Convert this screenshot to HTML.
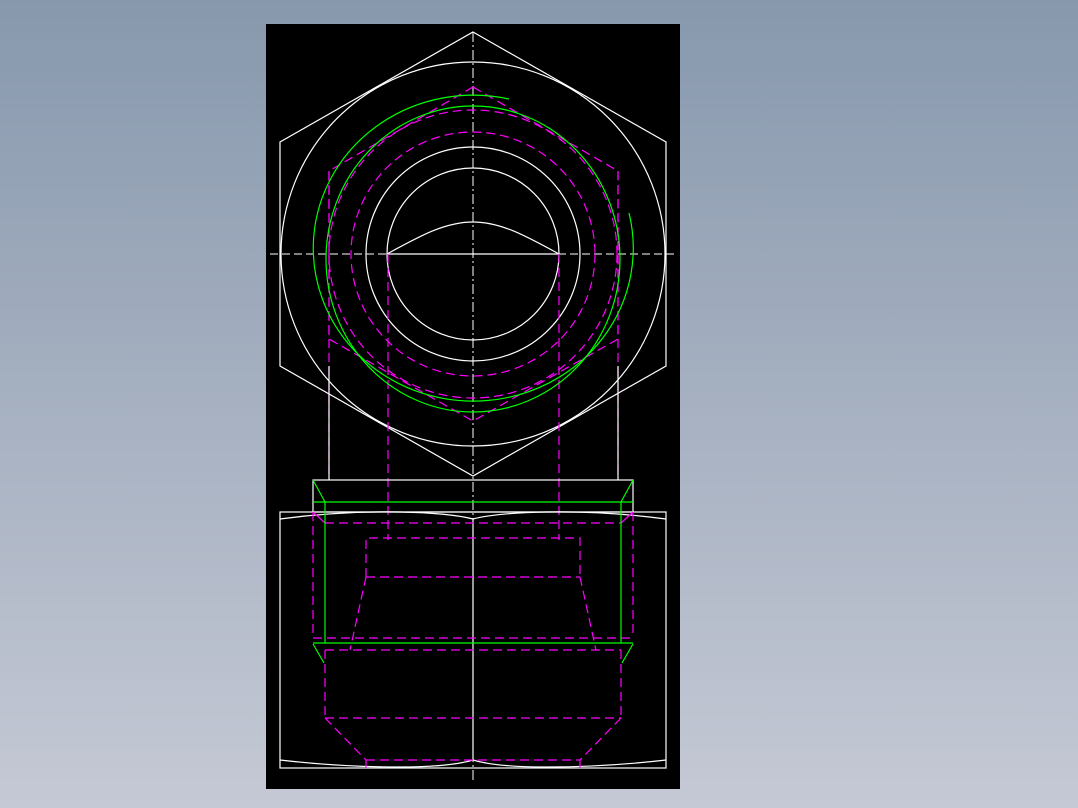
<!DOCTYPE html>
<html><head><meta charset="utf-8"><style>
html,body{margin:0;padding:0;width:1078px;height:808px;overflow:hidden;background:linear-gradient(#8798ad,#c5c9d5);}
svg{position:absolute;left:0;top:0}
</style></head><body>
<svg width="1078" height="808" viewBox="0 0 1078 808" fill="none" stroke-width="1.2">
<rect x="266" y="24" width="414" height="765" fill="#000" stroke="none"/>
<line x1="473" y1="32" x2="473" y2="782" stroke="#fff" stroke-dasharray="10,3,2,3" stroke-width="1"/>
<line x1="270" y1="254" x2="676" y2="254" stroke="#fff" stroke-dasharray="8,4" stroke-width="1"/>
<polygon points="473,32 666,142 666,366 473,476 280,366 280,142" stroke="#fff"/>
<circle cx="473" cy="254" r="192" stroke="#fff"/>
<circle cx="473" cy="254" r="107" stroke="#fff"/>
<circle cx="473" cy="254" r="86" stroke="#fff"/>
<path d="M387,254 C420,236 445,222 473,222 C501,222 526,236 559,254" stroke="#fff"/>
<line x1="387" y1="254" x2="559" y2="254" stroke="#fff"/>
<g stroke="#f0f" stroke-dasharray="9,5">
<circle cx="473" cy="254" r="122"/>
<circle cx="473" cy="254" r="144"/>
<polygon points="473,87 618,171 618,339 473,421 329,339 329,171"/>
<line x1="329" y1="171" x2="329" y2="480"/>
<line x1="618" y1="171" x2="618" y2="480"/>
<line x1="388" y1="254" x2="388" y2="540"/>
<line x1="559" y1="254" x2="559" y2="540"/>
</g>
<path d="M629,213 A160,153 0 1 1 509,99" stroke="#0f0"/>
<ellipse cx="473" cy="259" rx="147" ry="153" stroke="#0f0"/>
<line x1="329" y1="366" x2="329" y2="480" stroke="#fff"/>
<line x1="618" y1="366" x2="618" y2="480" stroke="#fff"/>
<rect x="313" y="480" width="320" height="32" stroke="#fff"/>
<rect x="280" y="512" width="386" height="256" stroke="#fff"/>
<path d="M280,519 Q340,511 400,512 Q450,513 473,519 Q496,513 546,512 Q606,511 666,519" stroke="#fff"/>
<path d="M280,760 Q340,767 400,767 Q450,767 473,760 Q496,767 546,767 Q606,767 666,760" stroke="#fff"/>
<line x1="473" y1="519" x2="473" y2="760" stroke="#fff"/>
<g stroke="#f0f" stroke-dasharray="9,5">
<line x1="313" y1="512" x2="313" y2="638"/>
<line x1="633" y1="512" x2="633" y2="638"/>
<line x1="325" y1="523" x2="621" y2="523"/>
<line x1="313" y1="638" x2="633" y2="638"/>
<line x1="325" y1="650" x2="621" y2="650"/>
<line x1="325" y1="650" x2="325" y2="718"/>
<line x1="621" y1="650" x2="621" y2="718"/>
<line x1="325" y1="718" x2="621" y2="718"/>
<line x1="325" y1="718" x2="366" y2="760"/>
<line x1="621" y1="718" x2="580" y2="760"/>
<line x1="366" y1="760" x2="580" y2="760"/>
<line x1="366" y1="760" x2="366" y2="768"/>
<line x1="580" y1="760" x2="580" y2="768"/>
<polyline points="366,577 366,538 580,538 580,577"/>
<line x1="366" y1="577" x2="580" y2="577"/>
<line x1="366" y1="577" x2="350" y2="650"/>
<line x1="580" y1="577" x2="596" y2="650"/>
</g>
<line x1="313" y1="512" x2="325" y2="523" stroke="#f0f"/>
<line x1="633" y1="512" x2="621" y2="523" stroke="#f0f"/>
<g stroke="#0f0">
<line x1="313" y1="502" x2="633" y2="502"/>
<line x1="313" y1="480" x2="325" y2="502"/>
<line x1="633" y1="480" x2="621" y2="502"/>
<line x1="325" y1="502" x2="325" y2="643"/>
<line x1="621" y1="502" x2="621" y2="643"/>
<line x1="313" y1="643" x2="633" y2="643"/>
<line x1="313" y1="644" x2="324" y2="663"/>
<line x1="633" y1="644" x2="622" y2="663"/>
</g>
</svg>
</body></html>
